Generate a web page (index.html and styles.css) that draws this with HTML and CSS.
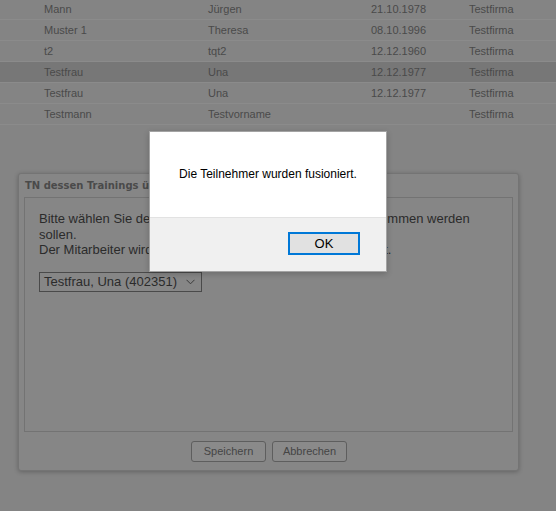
FILE: index.html
```html
<!DOCTYPE html>
<html>
<head>
<meta charset="utf-8">
<link rel="stylesheet" href="styles.css">
</head>
<body>
<div class="page">
  <table class="list">
    <tr><td class="c1">Mann</td><td class="c2">Jürgen</td><td class="c3">21.10.1978</td><td>Testfirma</td></tr>
    <tr><td class="c1">Muster 1</td><td class="c2">Theresa</td><td class="c3">08.10.1996</td><td>Testfirma</td></tr>
    <tr><td class="c1">t2</td><td class="c2">tqt2</td><td class="c3">12.12.1960</td><td>Testfirma</td></tr>
    <tr class="sel"><td class="c1">Testfrau</td><td class="c2">Una</td><td class="c3">12.12.1977</td><td>Testfirma</td></tr>
    <tr><td class="c1">Testfrau</td><td class="c2">Una</td><td class="c3">12.12.1977</td><td>Testfirma</td></tr>
    <tr><td class="c1">Testmann</td><td class="c2">Testvorname</td><td class="c3"></td><td>Testfirma</td></tr>
  </table>

  <div class="panel">
    <div class="ptitle">TN dessen Trainings übernommen werden sollen</div>
    <div class="fieldset">
      <p class="msg">Bitte wählen Sie den Mitarbeiter, dessen Schulungen übernommen werden<br>sollen.<br>Der Mitarbeiter wird danach aus der Teilnehmerliste gelöscht.</p>
      <div class="select">Testfrau, Una (402351)<svg class="chev" width="9" height="6" viewBox="0 0 9 6"><path d="M0.5 0.8 L4.5 4.8 L8.5 0.8" fill="none" stroke="#3a3a3a" stroke-width="1"/></svg></div>
    </div>
    <div class="pbtns">
      <span class="btn">Speichern</span>
      <span class="btn">Abbrechen</span>
    </div>
  </div>
</div>

<div class="alert">
  <div class="atop">Die Teilnehmer wurden fusioniert.</div>
  <div class="abottom"><span class="okbtn">OK</span></div>
</div>
</body>
</html>
```

FILE: styles.css
```css
html, body {
  margin: 0;
  padding: 0;
  background: #848484;
  width: 556px;
  height: 511px;
  overflow: hidden;
  font-family: "Liberation Sans", Arial, sans-serif;
}
.page {
  position: relative;
  height: 511px;
}
.list {
  border-collapse: collapse;
  table-layout: fixed;
  width: 556px;
  margin-top: -1px;
  font-size: 11px;
  color: #4a4a4a;
}
.list td {
  height: 20px;
  padding: 0;
  border-bottom: 1px solid #8b8b8b;
  vertical-align: middle;
  white-space: nowrap;
}
.list .c1 { padding-left: 44px; width: 164px; }
.list .c2 { width: 163px; }
.list .c3 { width: 98px; }
.list tr.sel td { background: #777777; }

.panel {
  margin: 48px 0 0 18px;
  width: 499px;
  height: 296px;
  background: #868686;
  border: 1px solid #747474;
  border-radius: 3px;
  box-shadow: 0 1px 4px rgba(0,0,0,0.25);
  display: flex;
  flex-direction: column;
}
.ptitle {
  font-family: "DejaVu Sans", Verdana, sans-serif;
  font-weight: bold;
  font-size: 10px;
  color: #4a4a4a;
  padding: 6px 0 0 6px;
  height: 17px;
  white-space: nowrap;
}
.fieldset {
  box-sizing: border-box;
  margin: 0 5px;
  height: 235px;
  border: 1px solid #737373;
  padding: 13px 14px 0 14px;
}
.msg {
  margin: 0;
  font-size: 13px;
  line-height: 15.5px;
  color: #2b2b2b;
}
.select {
  margin-top: 14px;
  width: 151px;
  height: 18px;
  border: 1px solid #4a4a4a;
  font-size: 13px;
  color: #2b2b2b;
  padding-left: 4px;
  padding-right: 6px;
  display: flex;
  align-items: center;
  justify-content: space-between;
}
.chev { display: block; }
.pbtns {
  display: flex;
  justify-content: center;
  gap: 6px;
  margin-top: 9px;
  padding-left: 1px;
}
.btn {
  width: 73px;
  height: 19px;
  border: 1px solid #5e5e5e;
  border-radius: 3px;
  font-size: 11px;
  color: #454545;
  text-align: center;
  line-height: 19px;
  background: #8a8a8a;
}

.alert {
  position: absolute;
  left: 149px;
  top: 131px;
  width: 236px;
  height: 139px;
  border: 1px solid #a3a3a3;
  box-shadow: 0 2px 6px rgba(0,0,0,0.2);
  display: flex;
  flex-direction: column;
}
.atop {
  background: #ffffff;
  height: 85px;
  font-size: 12px;
  color: #000;
  text-align: center;
  line-height: 84px;
  border-bottom: 1px solid #e2e2e2;
}
.abottom {
  flex: 1;
  background: #f0f0f0;
  display: flex;
  justify-content: flex-end;
  align-items: flex-start;
  padding: 14px 26px 0 0;
}
.okbtn {
  width: 68px;
  height: 19px;
  border: 2px solid #0078d7;
  background: #e1e1e1;
  font-size: 13px;
  color: #000;
  text-align: center;
  line-height: 19px;
}
```
